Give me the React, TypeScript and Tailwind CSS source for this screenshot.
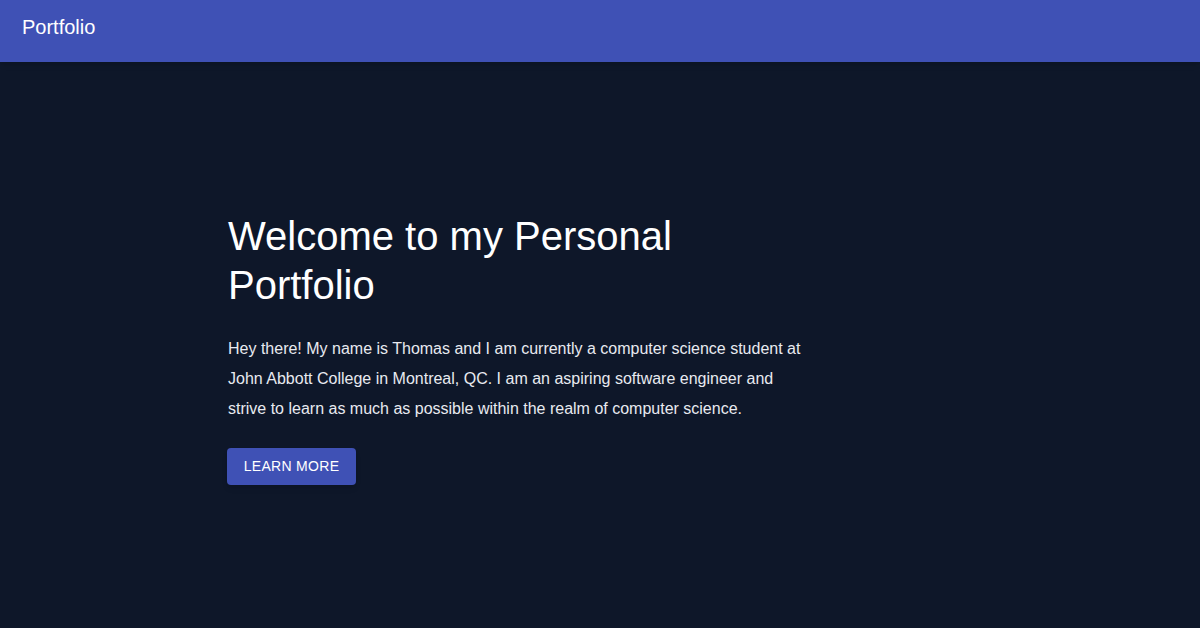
import React from "react";

export default function App() {
  return (
    <div className="min-h-[628px] w-full bg-[#0e1729] flex flex-col font-['Liberation_Sans',Arial,sans-serif]">
      <header className="h-[62px] bg-[#3f51b5] flex items-center px-[22px] pb-[8px] shadow-md">
        <span className="text-white text-[20px]">Portfolio</span>
      </header>
      <main className="flex-1 flex flex-col pl-[228px] pt-[150px]">
        <div className="w-[580px]">
          <h1 className="text-white text-[40px] leading-[49px]">
            Welcome to my Personal Portfolio
          </h1>
          <p className="mt-[24px] text-[#e8eaf0] text-[16px] leading-[30px]">
            Hey there! My name is Thomas and I am currently a computer science student at John Abbott College in Montreal, QC. I am an aspiring software engineer and strive to learn as much as possible within the realm of computer science.
          </p>
          <button className="mt-[24px] -ml-px h-[37px] w-[129px] rounded-[4px] bg-[#3f51b5] text-white text-[14px] tracking-[0.3px] uppercase shadow-md">
            Learn More
          </button>
        </div>
      </main>
    </div>
  );
}
